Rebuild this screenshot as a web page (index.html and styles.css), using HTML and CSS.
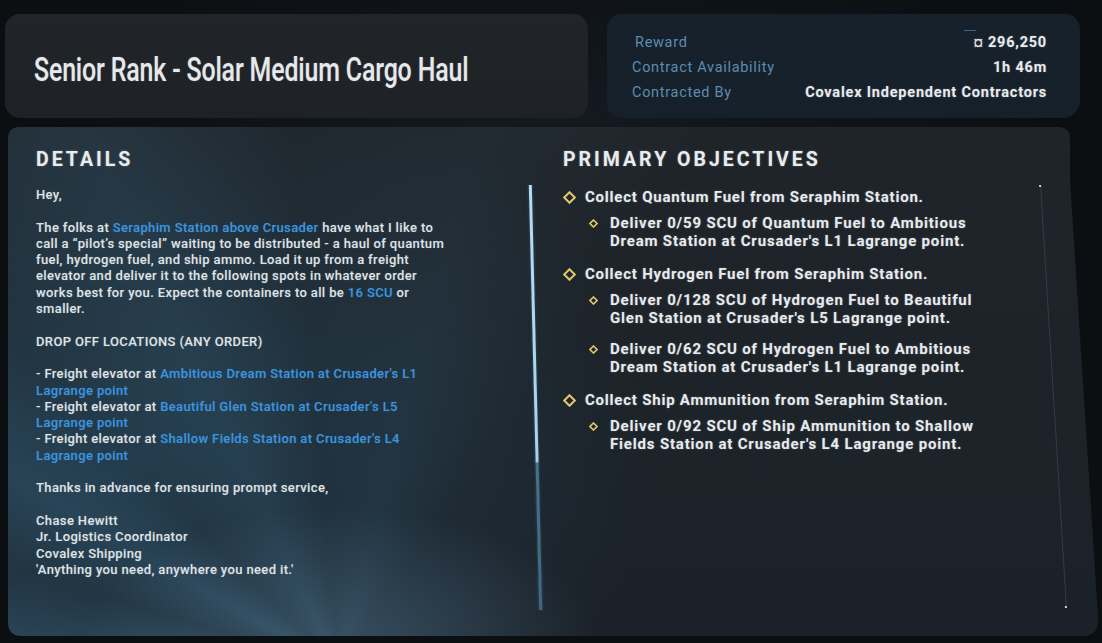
FILE: index.html
```html
<!DOCTYPE html>
<html lang="en">
<head>
<meta charset="utf-8">
<title>Contract</title>
<link rel="stylesheet" href="styles.css">
</head>
<body>
<div class="screen">
  <header class="top">
    <div class="title-card">
      <h1 class="title">Senior Rank - Solar Medium Cargo Haul</h1>
    </div>
    <div class="info-card">
      <div class="info-row">
        <span class="label label-reward">Reward</span>
        <span class="value value-reward"><span class="cur">¤</span> 296,250</span>
      </div>
      <div class="info-row">
        <span class="label">Contract Availability</span>
        <span class="value">1h 46m</span>
      </div>
      <div class="info-row">
        <span class="label">Contracted By</span>
        <span class="value">Covalex Independent Contractors</span>
      </div>
    </div>
  </header>

  <main class="panel">
    <section class="details">
      <h2 class="heading">DETAILS</h2>
      <div class="body">
        <p>Hey,</p>
        <p>The folks at <span class="link">Seraphim Station above Crusader</span> have what I like to<br>call a “pilot’s special” waiting to be distributed - a haul of quantum<br>fuel, hydrogen fuel, and ship ammo. Load it up from a freight<br>elevator and deliver it to the following spots in whatever order<br>works best for you. Expect the containers to all be <span class="link">16 SCU</span> or<br>smaller.</p>
        <p>DROP OFF LOCATIONS (ANY ORDER)</p>
        <p>- Freight elevator at <span class="link">Ambitious Dream Station at Crusader's L1<br>Lagrange point</span><br>- Freight elevator at <span class="link">Beautiful Glen Station at Crusader's L5<br>Lagrange point</span><br>- Freight elevator at <span class="link">Shallow Fields Station at Crusader's L4<br>Lagrange point</span></p>
        <p>Thanks in advance for ensuring prompt service,</p>
        <p>Chase Hewitt<br>Jr. Logistics Coordinator<br>Covalex Shipping<br>'Anything you need, anywhere you need it.'</p>
      </div>
    </section>

    <div class="divider"></div>

    <section class="objectives">
      <h2 class="heading">PRIMARY OBJECTIVES</h2>
      <ul class="obj-list">
        <li class="obj">
          <div class="obj-line">
            <svg class="dia" width="13" height="13" viewBox="0 0 13 13"><path d="M6.5 1.2 L11.8 6.5 L6.5 11.8 L1.2 6.5 Z" fill="none" stroke="#e2c76a" stroke-width="2"/></svg>
            <span>Collect Quantum Fuel from Seraphim Station.</span>
          </div>
          <ul class="sub-list">
            <li class="sub">
              <svg class="dia-s" width="9" height="9" viewBox="0 0 9 9"><path d="M4.5 1 L8 4.5 L4.5 8 L1 4.5 Z" fill="none" stroke="#e2c76a" stroke-width="1.6"/></svg>
              <span>Deliver 0/59 SCU of Quantum Fuel to Ambitious<br>Dream Station at Crusader's L1 Lagrange point.</span>
            </li>
          </ul>
        </li>
        <li class="obj">
          <div class="obj-line">
            <svg class="dia" width="13" height="13" viewBox="0 0 13 13"><path d="M6.5 1.2 L11.8 6.5 L6.5 11.8 L1.2 6.5 Z" fill="none" stroke="#e2c76a" stroke-width="2"/></svg>
            <span>Collect Hydrogen Fuel from Seraphim Station.</span>
          </div>
          <ul class="sub-list">
            <li class="sub">
              <svg class="dia-s" width="9" height="9" viewBox="0 0 9 9"><path d="M4.5 1 L8 4.5 L4.5 8 L1 4.5 Z" fill="none" stroke="#e2c76a" stroke-width="1.6"/></svg>
              <span>Deliver 0/128 SCU of Hydrogen Fuel to Beautiful<br>Glen Station at Crusader's L5 Lagrange point.</span>
            </li>
            <li class="sub">
              <svg class="dia-s" width="9" height="9" viewBox="0 0 9 9"><path d="M4.5 1 L8 4.5 L4.5 8 L1 4.5 Z" fill="none" stroke="#e2c76a" stroke-width="1.6"/></svg>
              <span>Deliver 0/62 SCU of Hydrogen Fuel to Ambitious<br>Dream Station at Crusader's L1 Lagrange point.</span>
            </li>
          </ul>
        </li>
        <li class="obj">
          <div class="obj-line">
            <svg class="dia" width="13" height="13" viewBox="0 0 13 13"><path d="M6.5 1.2 L11.8 6.5 L6.5 11.8 L1.2 6.5 Z" fill="none" stroke="#e2c76a" stroke-width="2"/></svg>
            <span>Collect Ship Ammunition from Seraphim Station.</span>
          </div>
          <ul class="sub-list">
            <li class="sub">
              <svg class="dia-s" width="9" height="9" viewBox="0 0 9 9"><path d="M4.5 1 L8 4.5 L4.5 8 L1 4.5 Z" fill="none" stroke="#e2c76a" stroke-width="1.6"/></svg>
              <span>Deliver 0/92 SCU of Ship Ammunition to Shallow<br>Fields Station at Crusader's L4 Lagrange point.</span>
            </li>
          </ul>
        </li>
      </ul>
    </section>

    <div class="track"></div>
  </main>
</div>
</body>
</html>
```

FILE: styles.css
```css
* { box-sizing: border-box; }

html, body {
  margin: 0;
  padding: 0;
  width: 1102px;
  height: 643px;
  overflow: hidden;
  background: #0d1014;
  font-family: Roboto, "Liberation Sans", sans-serif;
  color: #e3e7ea;
}

.screen {
  width: 1102px;
  height: 643px;
  padding: 14px 0 0 5px;
  background: radial-gradient(ellipse 700px 300px at 50% 20%, #141a20 0%, #0c0f12 70%);
}

/* ---------- top row ---------- */
.top {
  display: flex;
  gap: 19px;
  height: 104px;
}

.title-card {
  width: 583px;
  height: 104px;
  border-radius: 15px;
  background: linear-gradient(180deg, #212428 0%, #1e2125 100%);
  display: flex;
  align-items: center;
  padding: 6px 0 0 29px;
}

.title {
  margin: 0;
  font-family: Roboto, "Liberation Sans", sans-serif;
  font-weight: 500;
  font-size: 33px;
  letter-spacing: -0.2px;
  color: #e6e9ec;
  white-space: nowrap;
  transform: scaleX(0.755);
  transform-origin: left center;
  text-shadow: 0 0 2px rgba(230, 236, 240, 0.25);
}

.info-card {
  width: 473px;
  height: 104px;
  border-radius: 15px 15px 18px 15px;
  background: linear-gradient(180deg, #17212b 0%, #16202a 100%);
  padding: 16px 33px 0 25px;
  display: grid;
  grid-auto-rows: 25px;
}

.info-row {
  display: flex;
  justify-content: space-between;
  align-items: center;
  font-size: 14.5px;
}

.label {
  color: #5b8db0;
  letter-spacing: 0.7px;
}

.label-reward { padding-left: 3px; }

.value {
  font-weight: 700;
  color: #e8ebee;
  letter-spacing: 0.8px;
  text-shadow: 0 0 2px rgba(230, 236, 240, 0.3);
}

.value-reward {
  position: relative;
}

.value-reward::before {
  content: "";
  position: absolute;
  left: -10px;
  top: -4px;
  width: 12px;
  height: 1px;
  background: #3d6684;
}

.cur {
  font-weight: 700;
  font-size: 13px;
}

/* ---------- main panel ---------- */
.panel {
  margin: 9px 0 0 3px;
  width: 1092px;
  height: 509px;
  display: flex;
  align-items: flex-start;
  padding: 20px 0 0 28px;
  clip-path: path('M12,0 H1050 Q1062,0 1062,12 L1062,54 L1090,490 Q1092,509 1074,509 H14 Q0,509 0,495 V12 Q0,0 12,0 Z');
  background:
    radial-gradient(ellipse 260px 140px at 330px 520px, rgba(120, 175, 210, 0.28) 0%, rgba(70, 120, 150, 0.0) 100%),
    conic-gradient(from 245deg at 330px 540px,
      rgba(70, 125, 160, 0) 0deg,
      rgba(70, 125, 160, 0.22) 10deg,
      rgba(70, 125, 160, 0.05) 18deg,
      rgba(70, 125, 160, 0.28) 30deg,
      rgba(70, 125, 160, 0.04) 42deg,
      rgba(70, 125, 160, 0.20) 55deg,
      rgba(70, 125, 160, 0.02) 70deg,
      rgba(70, 125, 160, 0.14) 90deg,
      rgba(70, 125, 160, 0) 110deg,
      rgba(70, 125, 160, 0.08) 130deg,
      rgba(70, 125, 160, 0) 150deg,
      rgba(70, 125, 160, 0) 360deg),
    radial-gradient(ellipse 520px 420px at 120px 330px, rgba(40, 78, 102, 0.55) 0%, rgba(30, 55, 72, 0.0) 100%),
    linear-gradient(180deg, #1f2429 0%, #1c2329 60%, #1b2128 100%);
}

.heading {
  margin: 0;
  font-size: 19.5px;
  font-weight: 700;
  letter-spacing: 3px;
  line-height: 26px;
  color: #e9ecee;
  text-shadow: 0 0 2px rgba(230, 236, 240, 0.35);
}

.details {
  flex: 0 0 498px;
}

.body {
  margin-top: 14px;
  font-size: 13px;
  font-weight: 500;
  line-height: 16.3px;
  letter-spacing: 0.37px;
  color: #dfe3e6;
  text-shadow: 0 0 1.5px rgba(230, 236, 240, 0.25);
}

.body p {
  margin: 0 0 16.3px;
  white-space: nowrap;
}

.link {
  color: #3d94de;
  text-shadow: 0 0 1.5px rgba(61, 148, 222, 0.3);
}

.divider {
  flex: 0 0 3px;
  height: 425px;
  margin-top: 38px;
  background: linear-gradient(180deg, #b4dcf4 0%, #a7d1ee 65%, #48718b 65.5%, #3e6781 100%);
  transform: skewX(1.4deg);
  box-shadow: 0 0 3px rgba(150, 200, 235, 0.25);
}

.objectives {
  flex: 0 0 470px;
  margin-left: 26px;
}

.obj-list, .sub-list {
  list-style: none;
  margin: 0;
  padding: 0;
}

.obj-list {
  margin-top: 14px;
}

.obj {
  margin-bottom: 14px;
}

.obj-line {
  display: flex;
  align-items: center;
  gap: 9px;
  height: 20px;
  font-size: 15px;
  font-weight: 700;
  letter-spacing: 0.78px;
  color: #e8ebee;
  text-shadow: 0 0 2px rgba(230, 236, 240, 0.3);
}

.sub-list {
  margin-top: 7px;
  padding-left: 26px;
}

.sub {
  display: flex;
  align-items: flex-start;
  gap: 12px;
  margin-bottom: 13px;
  font-size: 15px;
  font-weight: 700;
  line-height: 18px;
  letter-spacing: 0.82px;
  color: #e8ebee;
  text-shadow: 0 0 2px rgba(230, 236, 240, 0.3);
  white-space: nowrap;
}

.sub:last-child { margin-bottom: 0; }

.dia { flex: 0 0 13px; }
.dia-s { flex: 0 0 9px; margin-top: 5px; }

.track {
  position: relative;
  flex: 0 0 1px;
  height: 423px;
  margin: 38px 0 0 20px;
  background: #353c44;
  transform: skewX(3.5deg);
}

.track::before,
.track::after {
  content: "";
  position: absolute;
  left: -1px;
  width: 2px;
  height: 2px;
  background: #c9ced3;
}

.track::before { top: 0; }
.track::after { bottom: 0; }
```
